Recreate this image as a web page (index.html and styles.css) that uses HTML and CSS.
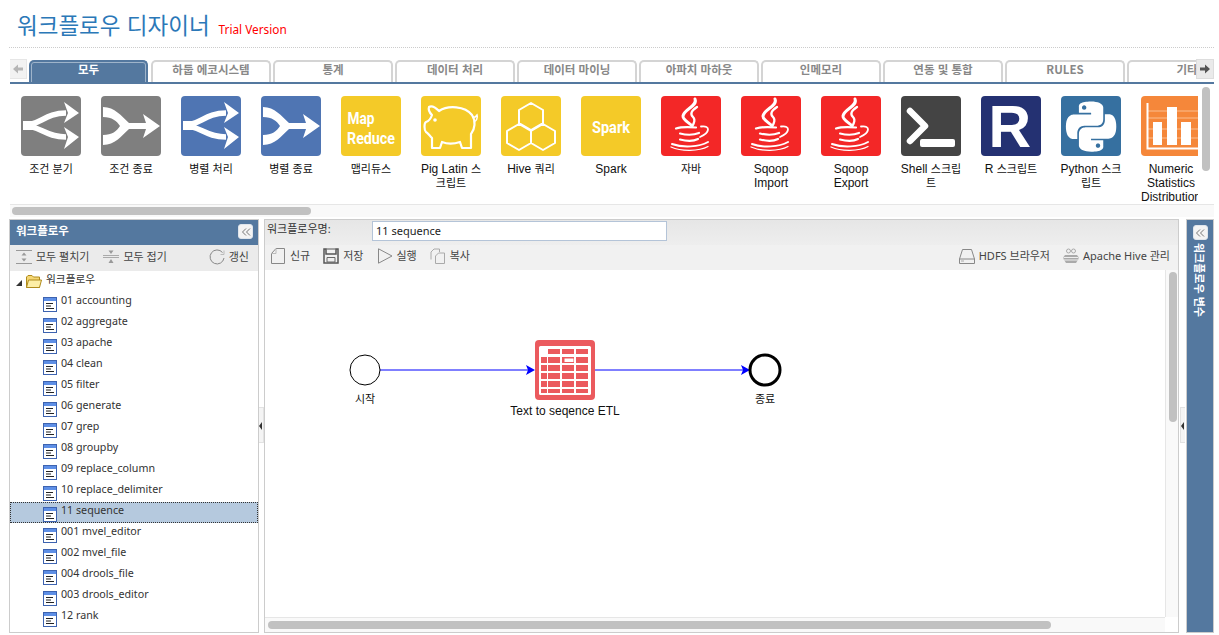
FILE: index.html
```html
<!DOCTYPE html>
<html lang="ko">
<head>
<meta charset="utf-8">
<title>워크플로우 디자이너</title>
<link rel="stylesheet" href="styles.css">
</head>
<body>
<svg class="defs" width="0" height="0" aria-hidden="true">
  <defs>
    <symbol id="split" viewBox="0 0 60 60">
      <path d="M2 29.500C19 29.500 24 17 45 17M2 29.500C19 29.500 24 41 45 41" fill="none" stroke="#fff" stroke-width="5.500"/>
      <path d="M2 25H15V34H2Z" fill="#fff"/>
      <path d="M43 6L58 17 43 27 47 17ZM43 31L58 41 43 53 47 41Z" fill="#fff"/>
    </symbol>
    <symbol id="merge" viewBox="0 0 60 60">
      <path d="M2 11C14 11 20 20 28 27H48V33H28C20 40 14 49 2 49V39C11 39 16 35 19 30 16 25 11 21 2 21Z" fill="#fff"/>
      <path d="M42 18L59 30 42 42 46 30Z" fill="#fff"/>
    </symbol>
    <symbol id="java" viewBox="0 0 60 60">
      <g fill="none" stroke="#fff" stroke-linecap="round">
        <path d="M34 3C37 10 23 13 22 20 21.500 24 29 27 31 30" stroke-width="3"/>
        <path d="M36 11C30 15 29 18 32 21 35 24 33 26 32 29" stroke-width="2.300"/>
        <path d="M15 32.500C21 30.500 29 31 35 31.500" stroke-width="2.200"/>
        <path d="M40 30.500C50 29 49 37 39 41" stroke-width="1.800"/>
        <path d="M19 37.500C25 39 33 39 38 37" stroke-width="2.200"/>
        <path d="M19 43.500C25 45 33 45 37 43" stroke-width="2.200"/>
        <path d="M11 48C22 52 38 51 47 46" stroke-width="2"/>
        <path d="M10 51C20 55.500 38 55.500 47 50.500" stroke-width="1.300"/>
      </g>
    </symbol>
    <symbol id="leaf" viewBox="0 0 14 15">
      <rect x=".5" y=".5" width="13" height="14" fill="#fff" stroke="#3d63b0"/>
      <rect x="1" y="1" width="12" height="3" fill="#5e8fe6"/>
      <path d="M3 6.500H10M3 9H8M3 11.500H11" stroke="#222" fill="none"/>
    </symbol>
  </defs>
</svg>

<div class="page">
  <header class="title-bar">
    <h1 class="title">워크플로우 디자이너</h1>
    <span class="trial">Trial Version</span>
  </header>

  <nav class="tabs">
    <div class="tab-spacer"></div>
    <div class="tab active">모두</div>
    <div class="tab">하둡 에코시스템</div>
    <div class="tab">통계</div>
    <div class="tab">데이터 처리</div>
    <div class="tab">데이터 마이닝</div>
    <div class="tab">아파치 마하웃</div>
    <div class="tab">인메모리</div>
    <div class="tab">연동 및 통합</div>
    <div class="tab">RULES</div>
    <div class="tab">기타</div>
    <button class="tab-arrow left"><svg width="12" height="12" viewBox="0 0 12 12"><path d="M1 6L6 1.500V4.500H11V7.500H6V10.500Z" fill="#b5b5b5"/></svg></button>
    <button class="tab-arrow right"><svg width="12" height="12" viewBox="0 0 12 12"><path d="M11 6L6 1.500V4.500H1V7.500H6V10.500Z" fill="#555"/></svg></button>
  </nav>

  <section class="palette">
    <div class="palette-view">
      <div class="tool"><svg class="tool-icon grey"><use href="#split"/></svg><span class="tool-label ko">조건 분기</span></div>
      <div class="tool"><svg class="tool-icon grey"><use href="#merge"/></svg><span class="tool-label ko">조건 종료</span></div>
      <div class="tool"><svg class="tool-icon blue"><use href="#split"/></svg><span class="tool-label ko">병렬 처리</span></div>
      <div class="tool"><svg class="tool-icon blue"><use href="#merge"/></svg><span class="tool-label ko">병렬 종료</span></div>
      <div class="tool">
        <svg class="tool-icon yellow" viewBox="0 0 60 60">
          <text x="6.500" y="28" class="logo-text" font-size="17" textLength="27" lengthAdjust="spacingAndGlyphs">Map</text>
          <text x="6" y="48" class="logo-text" font-size="17" textLength="48" lengthAdjust="spacingAndGlyphs">Reduce</text>
        </svg><span class="tool-label ko">맵리듀스</span></div>
      <div class="tool">
        <svg class="tool-icon yellow" viewBox="0 0 60 60">
          <path d="M8 11C11 9 15 12 18 15 27 9 44 10 51 19 55 25 54 33 50 38V52H41L39 46C33 48 26 48 21 46L19 52H11V42C8 39 7 37 5 36 3 34 3 27 5 26 8 25 10 22 11 19 9 17 7 14 8 11Z" fill="none" stroke="#fff" stroke-width="2.200" stroke-linejoin="round"/>
          <circle cx="14" cy="24" r="1.800" fill="#fff"/>
          <path d="M52 21C54 22 55 20 56 19 57 22 55 26 53 25" fill="none" stroke="#fff" stroke-width="1.600"/>
        </svg><span class="tool-label">Pig Latin <i class="ko">스크립트</i></span></div>
      <div class="tool">
        <svg class="tool-icon yellow" viewBox="0 0 60 60">
          <path d="M30 7L42 14V27L30 34 18 27V14ZM18 28L30 35V47L18 54 6 47V35ZM42 28L54 35V47L42 54 30 47V35Z" fill="none" stroke="#fff" stroke-width="2" stroke-linejoin="round"/>
        </svg><span class="tool-label">Hive <i class="ko">쿼리</i></span></div>
      <div class="tool">
        <svg class="tool-icon yellow" viewBox="0 0 60 60">
          <text x="11" y="37" class="logo-text" font-size="16.500" textLength="38" lengthAdjust="spacingAndGlyphs">Spark</text>
        </svg><span class="tool-label">Spark</span></div>
      <div class="tool"><svg class="tool-icon red"><use href="#java"/></svg><span class="tool-label ko">자바</span></div>
      <div class="tool"><svg class="tool-icon red"><use href="#java"/></svg><span class="tool-label">Sqoop Import</span></div>
      <div class="tool"><svg class="tool-icon red"><use href="#java"/></svg><span class="tool-label">Sqoop Export</span></div>
      <div class="tool">
        <svg class="tool-icon dark" viewBox="0 0 60 60">
          <path d="M9 15L24 30 9 45" fill="none" stroke="#fff" stroke-width="6.500" stroke-linecap="round" stroke-linejoin="round"/>
          <rect x="19" y="43" width="35" height="8" rx="2" fill="#fff"/>
        </svg><span class="tool-label">Shell <i class="ko">스크립트</i></span></div>
      <div class="tool">
        <svg class="tool-icon navy" viewBox="0 0 60 60">
          <text x="7.500" y="51" class="r-letter">R</text>
        </svg><span class="tool-label">R <i class="ko">스크립트</i></span></div>
      <div class="tool">
        <svg class="tool-icon python" viewBox="0 0 60 60">
          <path transform="translate(5 5.500) scale(2.090)" fill="#fff" fill-rule="evenodd" d="M14.250.18l.9.2.73.26.59.3.45.32.34.34.25.34.16.33.1.3.04.26.02.2-.01.13V8.500l-.05.63-.13.55-.21.46-.26.38-.3.31-.33.25-.35.19-.35.14-.33.1-.3.07-.26.04-.21.02H8.770l-.69.05-.59.14-.5.22-.41.27-.33.32-.27.35-.2.36-.15.37-.1.35-.07.32-.04.27-.02.21v3.060H3.170l-.21-.03-.28-.07-.32-.12-.35-.18-.36-.26-.36-.36-.35-.46-.32-.59-.28-.73-.21-.88-.14-1.050-.05-1.230.06-1.220.16-1.040.24-.87.32-.71.36-.57.4-.44.42-.33.42-.24.4-.16.36-.1.32-.05.24-.01h.16l.06.01h8.160v-.83H6.180l-.01-2.750-.02-.37.05-.34.11-.31.17-.28.25-.26.31-.23.38-.2.44-.18.51-.15.58-.12.64-.1.71-.06.77-.04.84-.02 1.270.05zm-6.300 1.980l-.23.33-.08.41.08.41.23.34.33.22.41.09.41-.09.33-.22.23-.34.08-.41-.08-.41-.23-.33-.33-.22-.41-.09-.41.09zm13.090 3.950l.28.06.32.12.35.18.36.27.36.35.35.47.32.59.28.73.21.88.14 1.040.05 1.230-.06 1.230-.16 1.040-.24.86-.32.71-.36.57-.4.45-.42.33-.42.24-.4.16-.36.09-.32.05-.24.02-.16-.01h-8.220v.82h5.840l.01 2.760.02.36-.05.34-.11.31-.17.29-.25.25-.31.24-.38.2-.44.17-.51.15-.58.13-.64.09-.71.07-.77.04-.84.01-1.270-.04-1.070-.14-.9-.2-.73-.25-.59-.3-.45-.33-.34-.34-.25-.34-.16-.33-.1-.3-.04-.25-.02-.2.01-.13v-5.340l.05-.64.13-.54.21-.46.26-.38.3-.32.33-.24.35-.2.35-.14.33-.1.3-.06.26-.04.21-.02.13-.01h5.840l.69-.05.59-.14.5-.21.41-.28.33-.32.27-.35.2-.36.15-.36.1-.35.07-.32.04-.28.02-.21V6.070h2.090l.14.01zm-6.470 14.250l-.23.33-.08.41.08.41.23.33.33.23.41.08.41-.08.33-.23.23-.33.08-.41-.08-.41-.23-.33-.33-.23-.41-.08-.41.08z"/>
        </svg><span class="tool-label">Python <i class="ko">스크립트</i></span></div>
      <div class="tool">
        <svg class="tool-icon orange" viewBox="0 0 60 60">
          <path d="M6 15H58M6 22H58M6 33H58M6 42H58" stroke="#fbbd8f" fill="none"/>
          <path d="M6.500 7V52.500H57" fill="none" stroke="#fff" stroke-width="2"/>
          <path d="M12 26H21V49H12ZM26 11H36V49H26ZM40 26H50V49H40Z" fill="#fff"/>
        </svg><span class="tool-label">Numeric Statistics Distribution</span></div>
    </div>
    <div class="palette-vscroll"><div class="thumb"></div></div>
  </section>
  <div class="palette-hscroll"><div class="thumb"></div></div>

  <main class="main">
    <aside class="left-panel">
      <div class="panel-head">
        <span>워크플로우</span>
        <button class="collapse"><svg width="10" height="10" viewBox="0 0 10 10"><path d="M5 1.500L1.500 5 5 8.500M9 1.500L5.500 5 9 8.500" fill="none" stroke="#777"/></svg></button>
      </div>
      <div class="tree-tools">
        <span class="tool-link"><svg width="16" height="16" viewBox="0 0 16 16"><path d="M0 1.500H16M0 14.500H16" stroke="#999" fill="none"/><path d="M8 3.500L5.500 6.500H10.500ZM8 12.500L5.500 9.500H10.500Z" fill="#999"/></svg>모두 펼치기</span>
        <span class="tool-link"><svg width="16" height="16" viewBox="0 0 16 16"><path d="M0 8.500H16M0 6.500H16" stroke="#aaa" fill="none"/><path d="M8 5L5.500 1.500H10.500ZM8 10L5.500 14H10.500Z" fill="#999"/></svg>모두 접기</span>
        <span class="tool-link push"><svg width="16" height="16" viewBox="0 0 16 16"><path d="M13.500 3.500A7 7 0 1 0 15 9" fill="none" stroke="#888"/><path d="M15 1.500V5.500H11.500" fill="none" stroke="#bbb"/></svg>갱신</span>
      </div>
      <ul class="tree">
        <li class="root"><svg class="twist" width="6" height="6" viewBox="0 0 6 6"><path d="M6 0V6H0Z" fill="#333"/></svg>
          <svg width="16" height="13" viewBox="0 0 16 13"><path d="M.5 12.500V2L2 .5H6L7.500 2H13.500V12.500Z" fill="#f5d774" stroke="#b08b1c"/><path d="M.5 12.500L2.500 5H15.500L13.500 12.500Z" fill="#fdeea6" stroke="#b08b1c"/></svg>
          <span>워크플로우</span></li>
        <li><svg class="doc"><use href="#leaf"/></svg><span>01 accounting</span></li>
        <li><svg class="doc"><use href="#leaf"/></svg><span>02 aggregate</span></li>
        <li><svg class="doc"><use href="#leaf"/></svg><span>03 apache</span></li>
        <li><svg class="doc"><use href="#leaf"/></svg><span>04 clean</span></li>
        <li><svg class="doc"><use href="#leaf"/></svg><span>05 filter</span></li>
        <li><svg class="doc"><use href="#leaf"/></svg><span>06 generate</span></li>
        <li><svg class="doc"><use href="#leaf"/></svg><span>07 grep</span></li>
        <li><svg class="doc"><use href="#leaf"/></svg><span>08 groupby</span></li>
        <li><svg class="doc"><use href="#leaf"/></svg><span>09 replace_column</span></li>
        <li><svg class="doc"><use href="#leaf"/></svg><span>10 replace_delimiter</span></li>
        <li class="selected"><svg class="doc"><use href="#leaf"/></svg><span>11 sequence</span></li>
        <li><svg class="doc"><use href="#leaf"/></svg><span>001 mvel_editor</span></li>
        <li><svg class="doc"><use href="#leaf"/></svg><span>002 mvel_file</span></li>
        <li><svg class="doc"><use href="#leaf"/></svg><span>004 drools_file</span></li>
        <li><svg class="doc"><use href="#leaf"/></svg><span>003 drools_editor</span></li>
        <li><svg class="doc"><use href="#leaf"/></svg><span>12 rank</span></li>
      </ul>
    </aside>

    <div class="splitter first"><div class="grip"></div></div>

    <section class="center">
      <div class="name-bar">
        <label class="name-label">워크플로우명:</label>
        <input class="name-input" type="text" value="11 sequence">
      </div>
      <div class="canvas-tools">
        <span class="tool-link"><svg width="16" height="16" viewBox="0 0 16 16"><path d="M1.500 15.500V5.500L6 .5H14.500V15.500Z" fill="none" stroke="#888"/><path d="M1.500 5.500H6V.5" fill="none" stroke="#bbb"/></svg>신규</span>
        <span class="tool-link"><svg width="16" height="16" viewBox="0 0 16 16"><path d="M1 1H3V6H13V1H15V15H1Z" fill="none" stroke="#555" stroke-width="1.500"/><path d="M3.500 1H12.500" stroke="#555"/><path d="M4 9.500H12V14H4Z" fill="#eee" stroke="#666"/></svg>저장</span>
        <span class="tool-link"><svg width="16" height="16" viewBox="0 0 16 16"><path d="M1.500 .8V15.200L15 8Z" fill="none" stroke="#888"/></svg>실행</span>
        <span class="tool-link"><svg width="16" height="16" viewBox="0 0 16 16"><path d="M1 11.500V4L4 1H9.500V4M5.500 15.500V8L8.500 5H14.500V15.500Z" fill="none" stroke="#aaa"/></svg>복사</span>
        <span class="tool-link push"><svg width="16" height="16" viewBox="0 0 16 16"><path d="M3.500 1.500H12.500L15.500 11V15.500H.5V11ZM.5 11H15.500" fill="none" stroke="#888"/><path d="M2 13H5" stroke="#aaa"/></svg>HDFS 브라우저</span>
        <span class="tool-link"><svg width="16" height="16" viewBox="0 0 16 16"><path d="M2 7H14L15.500 9V11L13 15H3L.5 11V9Z" fill="#aaa"/><path d="M1 9.500H15M1 12H15" stroke="#eee"/><circle cx="5.500" cy="3" r="2" fill="none" stroke="#aaa"/><circle cx="10.500" cy="3" r="2" fill="none" stroke="#aaa"/></svg>Apache Hive 관리</span>
      </div>
      <div class="workspace">
        <div class="canvas">
          <svg class="edges" width="900" height="347" viewBox="0 0 900 347">
            <path d="M115 100H268M330 100H483" fill="none" stroke="#00f"/>
            <path d="M261 95L270 100 261 105 263 100ZM476 95L485 100 476 105 478 100Z" fill="#00f"/>
            <circle cx="100" cy="100" r="15" fill="#fff" stroke="#000"/>
            <circle cx="500" cy="100" r="15" fill="#fff" stroke="#000" stroke-width="3"/>
            <rect x="270" y="70" width="60" height="60" rx="4" fill="#eb5a5e"/>
            <rect x="274" y="76" width="52" height="49" rx="1.500" fill="#fff"/>
            <path fill="#eb5a5e" d="M283 79h12v5h-12zM297 79h12v5h-12zM311 79h12v5h-12zM276 87h6v6h-6zM283 87h12v6h-12zM311 87h12v6h-12zM297 87h12v6h-12zM276 95h6v6h-6zM283 95h12v6h-12zM297 95h12v6h-12zM311 95h12v6h-12zM276 103h6v6h-6zM283 103h12v6h-12zM297 103h12v6h-12zM311 103h12v6h-12zM276 111h6v6h-6zM283 111h12v6h-12zM297 111h12v6h-12zM311 111h12v6h-12zM276 119h6v4h-6zM283 119h12v4h-12zM297 119h12v4h-12zM311 119h12v4h-12z"/>
            <rect x="299.500" y="88.500" width="9" height="3.500" fill="#fff"/>
          </svg>
          <span class="node-label start">시작</span>
          <span class="node-label task">Text to seqence ETL</span>
          <span class="node-label end">종료</span>
        </div>
        <div class="canvas-vscroll"><div class="thumb"></div></div>
        <div class="canvas-hscroll"><div class="thumb"></div></div>
        <div class="corner"></div>
      </div>
    </section>

    <div class="splitter second"><div class="grip"></div></div>

    <aside class="right-panel">
      <button class="collapse"><svg width="10" height="10" viewBox="0 0 10 10"><path d="M5 1.500L1.500 5 5 8.500M9 1.500L5.500 5 9 8.500" fill="none" stroke="#777"/></svg></button>
      <span class="vertical-title">워크플로우 변수</span>
    </aside>
  </main>
</div>
</body>
</html>
```

FILE: styles.css
```css
* { box-sizing: border-box; }
html, body { margin: 0; padding: 0; height: 100%; overflow: hidden; background: #fff; }
body { font-family: "Liberation Sans", "Noto Sans CJK KR", sans-serif; font-size: 12px; color: #222; }
.defs { position: absolute; }
.page { width: 1219px; height: 635px; padding: 0 5px 2px 9px; display: flex; flex-direction: column; }

.title-bar { height: 48px; border-bottom: 1px dotted #ccc; display: flex; align-items: baseline; padding: 6px 0 0 8px; flex: none; }
.title { margin: 0; font-family: "Noto Sans CJK KR", sans-serif; font-weight: 400; font-size: 22.500px; line-height: 36px; color: #2b78b8; }
.trial { margin-left: 9px; font-size: 11.800px; color: #f00; font-family: "Noto Sans", "Liberation Sans", sans-serif; }

.tabs { position: relative; height: 25px; margin-top: 11px; display: flex; gap: 2px; overflow: hidden; border-bottom: 2px solid #54789f; margin-left: 1px; flex: none; padding-top: 1px; }
.tab-spacer { width: 19px; flex: none; margin-right: -2px; }
.tab { flex: none; width: 120px; height: 23px; border: 2px solid #d4d4d4; border-bottom: 0; border-radius: 5px 5px 0 0; background: #fff; color: #888; font: bold 11.500px/15px "Noto Sans CJK KR", sans-serif; text-align: center; }
.tab.active { width: 119px; margin-right: 1px; background: #54789f; border-color: #54789f; color: #fff; box-shadow: inset 0 0 0 1px #9fb4ca; }
.tab-arrow { position: absolute; top: 0; width: 18px; height: 20px; padding: 0; border: 1px solid #e6e6e6; background: #f2f2f2; display: flex; align-items: center; justify-content: center; }
.tab-arrow.left { left: -1px; }
.tab-arrow.right { right: 0; background: #eaeaea; border-color: #ddd; }

.palette { height: 120px; display: flex; flex: none; }
.palette-view { flex: 1; min-width: 0; overflow: hidden; display: flex; gap: 20px; padding: 12px 0 0 12px; }
.tool { flex: none; width: 60px; text-align: center; line-height: 14px; font-size: 12px; color: #111; }
.tool-label { display: block; width: 64px; margin: 6px -2px 0; }
.ko { font-size: 11px; font-style: normal; }
.tool-icon { display: block; width: 60px; height: 60px; border-radius: 4px; }
.grey { background: #7f7f7f; }
.blue { background: #4f75b3; }
.yellow { background: #f4ca28; }
.red { background: #f32727; }
.dark { background: #444; }
.navy { background: #243172; }
.python { background: #3670a0; }
.orange { background: #f5873a; }
.logo-text { font-family: Roboto, "Liberation Sans", sans-serif; font-weight: 700; fill: #fff; }
.r-letter { font-family: "Liberation Sans", sans-serif; font-weight: 700; font-size: 59px; fill: #fff; }

.palette-vscroll { width: 16px; flex: none; padding: 3px 3px 0 4px; }
.palette-vscroll .thumb { width: 8px; height: 84px; border-radius: 4px; background: #c1c1c1; }
.palette-hscroll { height: 13px; flex: none; margin-left: 1px; background: #f9f9f9; border-top: 1px solid #e6e6e6; padding: 2px 0 0 2px; }
.palette-hscroll .thumb { width: 299px; height: 8px; border-radius: 4px; background: #c1c1c1; }

.main { flex: 1; min-height: 0; margin-top: 2px; display: flex; }
.left-panel { width: 250px; flex: none; border: 1px solid #ccc; display: flex; flex-direction: column; background: #fff; overflow: hidden; }
.panel-head { height: 25px; flex: none; background: #54789f; color: #fff; font: bold 11.500px/25px "Noto Sans CJK KR", sans-serif; display: flex; align-items: center; justify-content: space-between; padding: 0 5px 2px 6px; }
.panel-head span { margin-top: -2px; }
.collapse { width: 15px; height: 15px; padding: 0; border: 1px solid #dfe5ec; border-radius: 3px; background: #f4f4f4; display: flex; align-items: center; justify-content: center; flex: none; }

.tool-link { display: inline-flex; align-items: center; gap: 4px; font: 11px/16px "Noto Sans", "Noto Sans CJK KR", sans-serif; color: #444; white-space: nowrap; }
.tool-link.push { margin-left: auto; }
.tree-tools { height: 26px; flex: none; background: #ebebeb; display: flex; align-items: center; gap: 14px; padding: 0 9px 2px 6px; }

.tree { list-style: none; margin: 0; padding: 0; font: 10.700px/21px "Noto Sans", "Noto Sans CJK KR", sans-serif; color: #333; }
.tree li { height: 21px; display: flex; align-items: center; padding-left: 33px; }
.tree li span { margin-left: 4px; position: relative; top: -2px; }
.tree .root { padding-left: 6px; }
.tree .root .twist { margin-right: 4px; margin-top: 3px; }
.tree .doc { width: 14px; height: 15px; margin-top: 3px; flex: none; }
.tree .selected { background: #b5c9de; outline: 1px dotted #333; outline-offset: -1px; }

.splitter { flex: none; position: relative; }
.splitter.first { width: 5px; }
.splitter.second { width: 7px; }
.grip { position: absolute; left: 0; top: 188px; width: 5px; height: 36px; background: #f4f4f4; border: 1px solid #e2e2e2; border-left: 0; }
.second .grip { left: 1px; border-left: 1px solid #e2e2e2; border-right: 0; }
.grip::after { content: ""; position: absolute; left: 0; top: 14px; border: 4px solid transparent; border-right: 3px solid #333; border-left: 0; }

.center { flex: 1; min-width: 0; border: 1px solid #ccc; display: flex; flex-direction: column; background: #fff; }
.name-bar { height: 25px; flex: none; background: linear-gradient(#e6e6e6, #eee); display: flex; align-items: center; padding: 0 0 3px 2px; }
.name-label { width: 105px; font: 11px/16px "Noto Sans", "Noto Sans CJK KR", sans-serif; color: #333; position: relative; top: -2px; }
.name-input { width: 295px; height: 20px; border: 1px solid #b4c4d8; padding: 0 3px 2px; font: 11px "Noto Sans", sans-serif; color: #222; outline: 0; background: #fff; }
.canvas-tools { height: 25px; flex: none; background: #f1f1f1; display: flex; align-items: center; gap: 13px; padding: 0 8px 0 5px; }
.canvas-tools .tool-link { position: relative; top: -2px; }

.workspace { flex: 1; min-height: 0; display: grid; grid-template-columns: 1fr 13px; grid-template-rows: 1fr 15px; }
.canvas { position: relative; overflow: hidden; background: #fff; }
.edges { position: absolute; left: 0; top: 0; }
.node-label { position: absolute; transform: translateX(-50%); font-size: 12px; line-height: 14px; color: #111; white-space: nowrap; }
.node-label.start { left: 100px; top: 122px; font-size: 11px; }
.node-label.task { left: 300px; top: 134px; }
.node-label.end { left: 500px; top: 122px; font-size: 11px; }
.canvas-vscroll { background: #f9f9f9; border-left: 1px solid #e6e6e6; padding: 2px 0 0 3px; }
.canvas-vscroll .thumb { width: 8px; height: 150px; border-radius: 4px; background: #c1c1c1; }
.canvas-hscroll { background: #f9f9f9; border-top: 1px solid #e6e6e6; padding: 3px 0 0 3px; }
.canvas-hscroll .thumb { width: 783px; height: 8px; border-radius: 4px; background: #c1c1c1; }
.corner { background: #fff; }

.right-panel { width: 28px; flex: none; background: #54789f; border: 1px solid #ccc; display: flex; flex-direction: column; align-items: center; padding-top: 5px; gap: 3px; }
.vertical-title { writing-mode: vertical-rl; text-orientation: sideways; color: #fff; font: bold 11px/16px "Noto Sans CJK KR", sans-serif; }
```
